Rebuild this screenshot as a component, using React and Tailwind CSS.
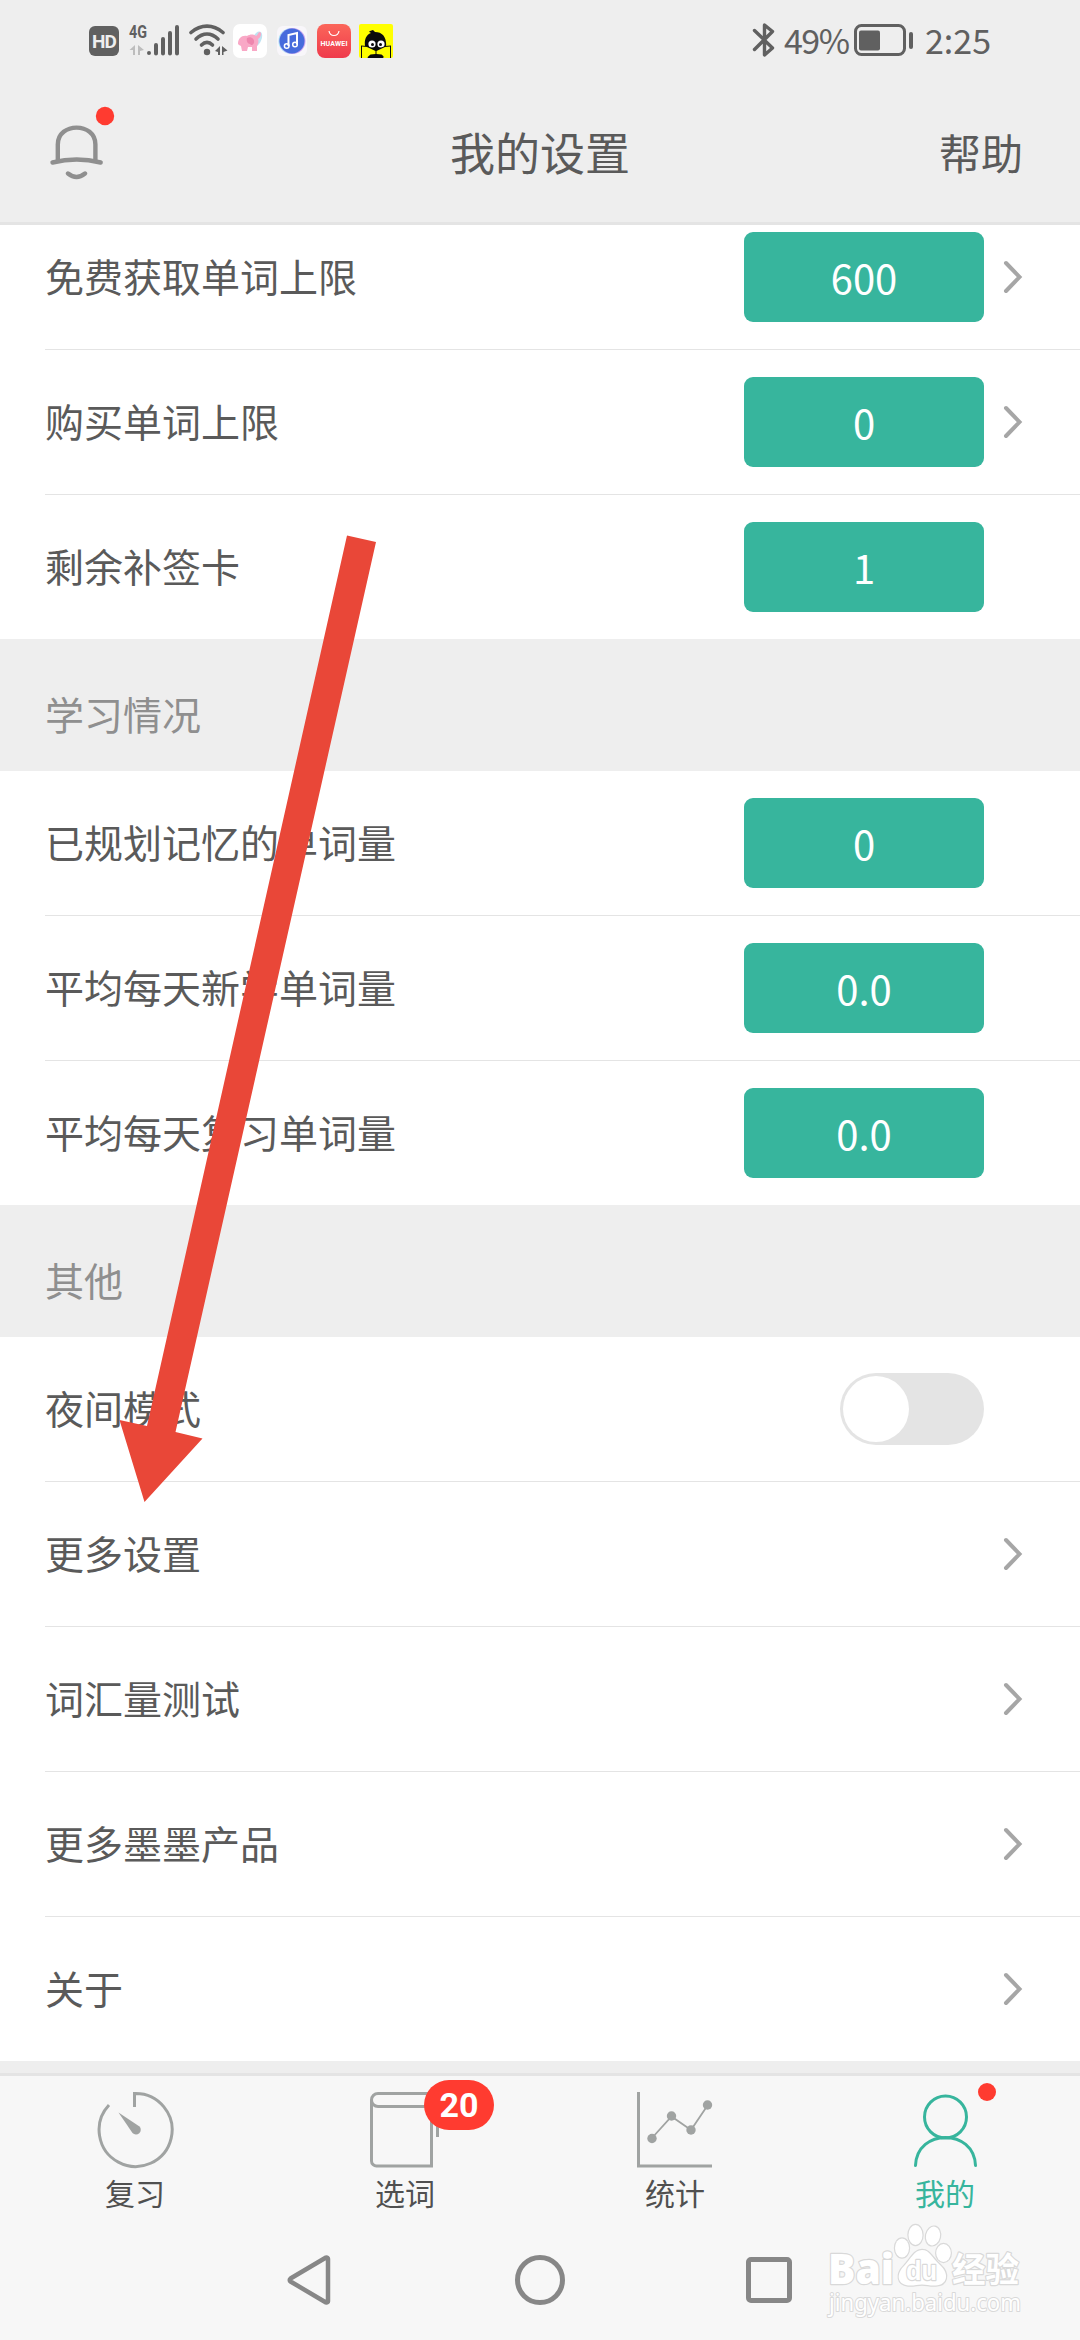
import React from 'react';

const limitRows = [
  { label: '免费获取单词上限', value: '600', arrow: true },
  { label: '购买单词上限', value: '0', arrow: true },
  { label: '剩余补签卡', value: '1' },
];

const studyRows = [
  { label: '已规划记忆的单词量', value: '0' },
  { label: '平均每天新学单词量', value: '0.0' },
  { label: '平均每天复习单词量', value: '0.0' },
];

const otherRows = [
  { label: '夜间模式', toggle: true },
  { label: '更多设置', arrow: true },
  { label: '词汇量测试', arrow: true },
  { label: '更多墨墨产品', arrow: true },
  { label: '关于', arrow: true },
];

const StatusBar = () => (
  <div className="flex h-[84px] shrink-0 items-start justify-between pr-[89px] pl-[89px] text-[#606060]">
    <div className="flex pt-[24px]">
      <div className="mt-[2px] flex h-[30px] w-[30px] items-center justify-center rounded-[6px] bg-[#606060] font-['Roboto',sans-serif] text-[19px] leading-none font-bold tracking-[-1px] text-[#eee]">
        HD
      </div>

      {/* 4G label, data arrows and signal bars */}
      <svg className="-mt-[6px] ml-[9px]" width="52" height="40" viewBox="0 -6 52 40">
        <text x="1" y="14" fontSize="18" fontWeight="700" textLength="18" lengthAdjust="spacingAndGlyphs" fill="#606060" fontFamily="Roboto, sans-serif">4G</text>
        <path d="M7 21v10H5v-5H1.500zM10 21v10h2v-4l4-1z" fill="#bdbdbd" />
        <g stroke="#606060" strokeWidth="4" strokeLinecap="round">
          <path d="M21 29v0.1M28 21v8.500M35 15v14.500M42 9v20.500M49 3v26.500" />
        </g>
      </svg>

      <svg className="ml-[9px]" width="40" height="34" viewBox="0 0 40 34">
        <g fill="none" stroke="#606060" strokeWidth="3.600" strokeLinecap="round">
          <path d="M2 8.500C12 0 24 0 34 8.500" />
          <path d="M7 15c7-6.500 15-6.500 22 0" />
          <path d="M12.500 21c3.500-3.500 7.500-3.500 11 0" />
        </g>
        <circle cx="18" cy="28" r="3.200" fill="#606060" />
        <path d="M31 22v9h-2v-3l-3-1zM33 22v9h1.500v-3l4-1.500z" fill="#606060" />
      </svg>

      <svg className="ml-[4px]" width="34" height="34" viewBox="0 0 34 34">
        <rect width="34" height="34" rx="7" fill="#fff" />
        <path d="M21 12c2-5 7-6 8-2 1 4-2 10-5 12" fill="#bfe3f2" />
        <path d="M5 20c0-6 4-9 9-8 3-2 7-2 9 0 2-1 2-4 4-4 2 1 1 5-2 7 1 3 0 5-1 7v5h-5v-4h-4l-1 4h-5l-1-5-2-1z" fill="#f9a8c6" />
        <path d="M14 14c4-2 8 1 7 5-1 2-3 3-4 1-2 0-4-3-3-6z" fill="#ee86ae" />
      </svg>

      <svg className="mt-[2px] ml-[10px]" width="30" height="30" viewBox="0 0 30 30">
        <rect width="30" height="30" rx="6" fill="#f8f6fa" />
        <circle cx="14.500" cy="15" r="13" fill="#9ee0f4" />
        <circle cx="15.500" cy="15" r="13" fill="#c8a4f0" />
        <circle cx="15" cy="15" r="12.500" fill="#466bdc" />
        <path d="M11.500 20v-11l8.500-2v11.500" fill="none" stroke="#fff" strokeWidth="2" />
        <circle cx="9.700" cy="20" r="2.300" fill="none" stroke="#fff" strokeWidth="1.500" />
        <circle cx="18" cy="18.500" r="2.300" fill="none" stroke="#fff" strokeWidth="1.500" />
      </svg>

      <svg className="ml-[10px]" width="34" height="34" viewBox="0 0 34 34">
        <defs>
          <linearGradient id="store" x1="0" y1="0" x2="0" y2="1">
            <stop offset="0" stopColor="#fb665a" />
            <stop offset="1" stopColor="#ef3a4c" />
          </linearGradient>
        </defs>
        <rect width="34" height="34" rx="8" fill="url(#store)" />
        <path d="M12 7c1 6 9 6 10 0" fill="none" stroke="#fff" strokeWidth="1.200" />
        <text x="3.500" y="22" fontSize="7" fontWeight="700" textLength="27" fill="#fff" fontFamily="Roboto, sans-serif">HUAWEI</text>
      </svg>

      <svg className="ml-[8px]" width="34" height="34" viewBox="0 0 34 34">
        <rect width="34" height="34" rx="2" fill="#ff0" />
        <path d="M6 22c-1-7 2-12 6-13-2-1-2-2-1-2l3-1 2 2c8 0 12 6 11 15l-3 12H9z" fill="#0b0b0b" />
        <circle cx="13" cy="20" r="3.600" fill="#fff" />
        <circle cx="22" cy="20" r="3.600" fill="#fff" />
        <circle cx="13.500" cy="20.500" r="1.500" fill="#0b0b0b" />
        <circle cx="21.500" cy="20.500" r="1.500" fill="#0b0b0b" />
        <path d="M2 34V21.500l6 0.500 9 4.500 9-4.500 6-0.500V34h-4l-4-2.500-7 2-7-2-4 2.500z" fill="#0b0b0b" />
        <path d="M3 34V22.500l5 0.500 8.500 4v3l-5 0.500-4 3.500zM31 34V22.500l-5 0.500-8.500 4v3l5 0.500 4 3.500z" fill="#ff0" />
      </svg>
    </div>

    <div className="flex font-['Noto_Sans_CJK_SC',sans-serif] text-[34px] leading-none">
      <svg className="mt-[22px]" width="24" height="36" viewBox="0 0 24 36">
        <path d="M2.500 8.500L20.500 26 12.500 33V3l8 6.500L2.500 27.500" fill="none" stroke="#606060" strokeWidth="3.400" strokeLinejoin="round" strokeLinecap="round" />
      </svg>
      <span className="mt-[23px] ml-[8px] w-[70px] tracking-[-1.500px]">49%</span>
      <svg className="mt-[24px] ml-0" width="60" height="32" viewBox="0 0 60 32">
        <rect x="1.500" y="1.500" width="49" height="29" rx="6" fill="none" stroke="#606060" strokeWidth="3" />
        <rect x="5" y="6.500" width="21" height="20" rx="2" fill="#606060" />
        <rect x="55" y="8" width="4" height="17" rx="2" fill="#606060" />
      </svg>
      <span className="mt-[23px] ml-[11px]">2:25</span>
    </div>
  </div>
);

const Header = () => (
  <header className="flex h-[141px] shrink-0 items-center justify-between border-b-[3px] border-[#e4e4e4] text-[#5a5a5a]">
    <div className="w-[300px] pl-[48px]">
      <svg className="relative -top-[11px]" width="70" height="76" viewBox="0 0 70 76">
        <g fill="none" stroke="#8f8f8f" strokeWidth="4.400" strokeLinecap="round">
          <path d="M9.800 56V40.500C9.800 18 47.400 18 47.400 40.500V56" />
          <path d="M4.500 58.500Q28.600 52.500 52.700 58.500" />
          <path d="M20 69.500Q28.500 76.500 37 69.500" />
        </g>
        <circle cx="57" cy="12" r="9.200" fill="#ff3b30" />
      </svg>
    </div>
    <h1 className="pb-[3px] text-[45px] leading-none">我的设置</h1>
    <div className="w-[300px] pr-[57px] pb-[2px] text-right text-[42px] leading-none">帮助</div>
  </header>
);

const Chevron = () => (
  <svg width="20" height="34" viewBox="0 0 20 34">
    <path d="M3 3L16.500 17L3 31" fill="none" stroke="#a6a6a6" strokeWidth="4" strokeLinecap="round" />
  </svg>
);

const Row = ({ label, value, arrow, toggle }) => (
  <div className="ml-[45px] flex h-[145px] items-center border-b border-[#e4e4e4] last:h-[144px] last:border-b-0">
    <span className="flex-1 pb-[3px] text-[39px] leading-none text-[#5a5a5a]">{label}</span>
    {value && (
      <div className="flex h-[90px] w-[240px] items-center justify-center rounded-[9px] bg-[#37b59d] pb-px text-[40px] leading-none text-white">
        {value}
      </div>
    )}
    {toggle && (
      <div className="flex h-[72px] w-[144px] items-center rounded-full bg-[#e4e4e4] pl-[3px]">
        <div className="h-[66px] w-[66px] rounded-full bg-white" />
      </div>
    )}
    <div className="flex w-[96px] pl-[19px]">{arrow && <Chevron />}</div>
  </div>
);

const SectionTitle = ({ children }) => (
  <h2 className="h-[132px] pt-[55px] pl-[45px] text-[39px] leading-none text-[#8f8f8f]">{children}</h2>
);

const Section = ({ rows }) => (
  <div className="bg-white">
    {rows.map((row) => (
      <Row key={row.label} {...row} />
    ))}
  </div>
);

const ReviewIcon = () => (
  <svg width="80" height="80" viewBox="0 0 80 80">
    <path d="M39.500 17V3.500A36.500 36.500 0 1 1 14 15" fill="none" stroke="#a0a3a2" strokeWidth="3" />
    <path d="M23.500 22.500L44.500 36.500A4.600 4.600 0 1 1 37.500 43Z" fill="#a0a3a2" />
  </svg>
);

const BookIcon = () => (
  <svg width="80" height="80" viewBox="0 0 80 80">
    <g fill="none" stroke="#a0a3a2" strokeWidth="3">
      <path d="M70 3.500H13A6.500 6.500 0 0 0 13 16.500H66.500V76H12A5 5 0 0 1 6.500 71V10" />
      <path d="M72.500 16V47" />
    </g>
  </svg>
);

const ChartIcon = () => (
  <svg width="80" height="80" viewBox="0 0 80 80">
    <path d="M3.500 2V76H77" fill="none" stroke="#a0a3a2" strokeWidth="3" />
    <path d="M17 48L36.500 26.500L56 40L72.500 15.500" fill="none" stroke="#a0a3a2" strokeWidth="1.800" />
    <g fill="#a0a3a2">
      <circle cx="17" cy="48.500" r="4.700" />
      <circle cx="36.500" cy="26" r="4.700" />
      <circle cx="56" cy="40" r="4.700" />
      <circle cx="72.500" cy="15" r="4.700" />
    </g>
  </svg>
);

const MineIcon = () => (
  <svg width="80" height="80" viewBox="0 0 80 80">
    <g fill="none" stroke="#37b59d" strokeWidth="3" strokeLinecap="round">
      <circle cx="40.500" cy="27" r="21" />
      <path d="M10.500 75.500C12 38 69 38 70.500 75.500" />
    </g>
  </svg>
);

const tabs = [
  { label: '复习', Icon: ReviewIcon },
  { label: '选词', Icon: BookIcon, badge: '20' },
  { label: '统计', Icon: ChartIcon },
  { label: '我的', Icon: MineIcon, active: true },
];

const TabBar = () => (
  <nav className="grid h-[147px] shrink-0 grid-cols-4 border-t-[3px] border-[#e4e4e4] bg-[#f7f7f7]">
    {tabs.map(({ label, Icon, badge, active }) => (
      <div key={label} className="relative flex flex-col items-center pt-[14px]">
        <Icon />
        <span className={`mt-[7px] text-[30px] leading-none ${active ? 'text-[#37b59d]' : 'text-[#505050]'}`}>
          {label}
        </span>
        {badge && (
          <span className="absolute top-[4px] left-[154px] flex h-[50px] w-[70px] items-center justify-center rounded-full bg-[#ff3b30] font-['Roboto',sans-serif] text-[34px] leading-none font-bold text-white">
            {badge}
          </span>
        )}
        {active && <span className="absolute top-[7px] left-[168px] h-[18px] w-[18px] rounded-full bg-[#ff3b30]" />}
      </div>
    ))}
  </nav>
);

const SystemNav = () => (
  <div className="flex flex-1 items-center justify-between bg-[#f7f7f7] pr-[288px] pl-[285px]">
    <svg width="48" height="56" viewBox="0 0 48 56">
      <path d="M41 5.500a1.500 1.500 0 0 1 2 1.500V49a1.500 1.500 0 0 1-2 1.500L5.500 29.500a1.800 1.800 0 0 1 0-3Z" fill="none" stroke="#878787" strokeWidth="4.500" strokeLinejoin="round" />
    </svg>
    <div className="h-[50px] w-[50px] rounded-full border-[5px] border-[#878787]" />
    <div className="h-[46px] w-[46px] rounded-[5px] border-[5px] border-[#878787]" />
  </div>
);

const Watermark = () => (
  <svg className="absolute top-[2216px] left-[816px]" width="220" height="120" viewBox="-4 -4 220 120">
    <g fill="#fff" stroke="#d9d9d9" strokeWidth="2.400" paintOrder="stroke" strokeLinejoin="round">
      <text x="8" y="64" fontSize="42" fontWeight="800" textLength="66" lengthAdjust="spacingAndGlyphs" fontFamily="Open Sans, sans-serif">Bai</text>
      <ellipse cx="82" cy="28" rx="7" ry="9.500" />
      <ellipse cx="95.500" cy="15" rx="7" ry="10" />
      <ellipse cx="113" cy="16" rx="7" ry="9.500" transform="rotate(12 113 16)" />
      <ellipse cx="123.500" cy="33" rx="7.300" ry="9" />
      <path d="M102 30C110 30 112 38 120 45C130 54 127 65 116 65.500C110 66 107 64.500 102 64.500C97 64.500 94 66 88 65.500C77 64 76 54 84 46C91 39 94 30 102 30Z" />
      <text x="86" y="60" fontSize="28" fontWeight="700" textLength="31" lengthAdjust="spacingAndGlyphs" fontFamily="Liberation Sans, sans-serif">du</text>
      <text x="132" y="62" fontSize="34" fontWeight="700" textLength="67" lengthAdjust="spacingAndGlyphs" fontFamily="Noto Sans CJK SC, sans-serif">经验</text>
      <text x="9" y="91" fontSize="23" textLength="192" lengthAdjust="spacingAndGlyphs" fontFamily="Noto Sans, sans-serif" strokeWidth="2">jingyan.baidu.com</text>
    </g>
  </svg>
);

const App = () => (
  <div className="relative flex h-[2340px] w-[1080px] flex-col overflow-hidden bg-[#eee] font-['Noto_Sans_CJK_SC',sans-serif]">
    <StatusBar />
    <Header />
    <main className="h-[1848px] shrink-0 overflow-hidden">
      {/* list is scrolled a little, so the first row is cut by the header */}
      <div className="-mt-[20px]">
        <Section rows={limitRows} />
        <SectionTitle>学习情况</SectionTitle>
        <Section rows={studyRows} />
        <SectionTitle>其他</SectionTitle>
        <Section rows={otherRows} />
      </div>
    </main>
    <TabBar />
    <SystemNav />

    <svg className="absolute top-[530px] left-[110px]" width="280" height="980" viewBox="110 530 280 980">
      <path d="M347 535.500L376 542L175.500 1432L202.500 1438.500L144.500 1502L119.500 1420L147 1426Z" fill="#e94738" />
    </svg>
    <Watermark />
  </div>
);

export default App;
